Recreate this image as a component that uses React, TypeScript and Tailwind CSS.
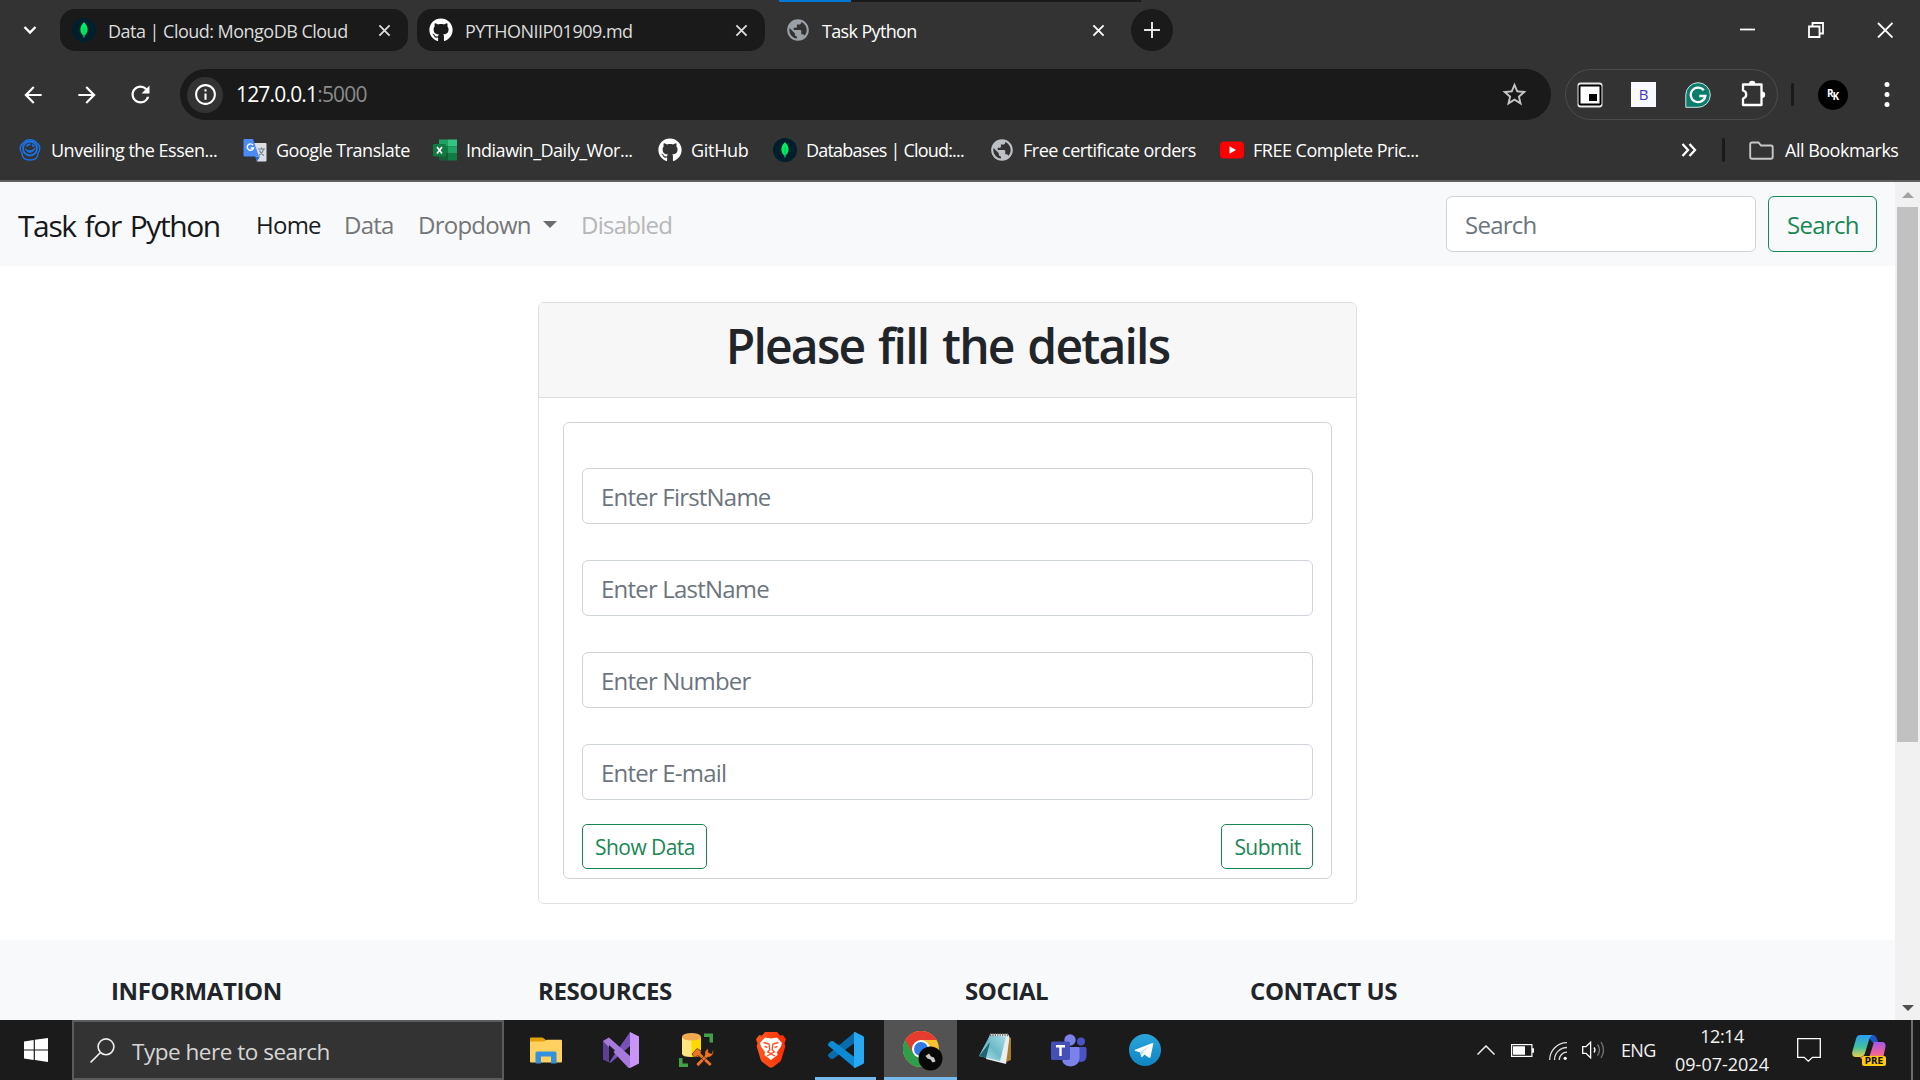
import type { ReactNode } from 'react';
import { FaGithub } from 'react-icons/fa';
import { MdPublic, MdArrowBack, MdArrowForward, MdRefresh, MdStarOutline, MdInfoOutline } from 'react-icons/md';

function MongoIcon() {
  return (
    <svg viewBox="0 0 24 24" className="size-6 shrink-0">
      <circle cx="12" cy="12" r="12" fill="#001e2b" />
      <path d="M12 4c.6 1.200 3.600 3.200 3.600 7.600 0 3.100-1.800 5-3.200 6.100L12.200 20h-.5l-.3-2.300C10 16.600 8.400 14.700 8.400 11.600 8.400 7.200 11.500 5.200 12 4Z" fill="#00ed64" />
      <path d="M12.100 9v10" stroke="#00a34a" strokeWidth=".6" />
    </svg>
  );
}

function CloseX({ className }: { className: string }) {
  return (
    <svg viewBox="0 0 14 14" className={className} fill="none" stroke="currentColor" strokeWidth="2">
      <path d="M1.500 1.500 12.500 12.500M12.500 1.500 1.500 12.500" />
    </svg>
  );
}

function Tab({ icon, title, tracking }: { icon: ReactNode; title: string; tracking: string }) {
  return (
    <div className="flex h-[42px] w-[348px] items-center rounded-[15px] bg-[#1a1a1a] pl-3 pr-[17px] text-[#dcdcdc]">
      {icon}
      <span className={`ml-3 mt-[2px] flex-1 whitespace-nowrap text-[18px] leading-6 ${tracking}`}>{title}</span>
      <CloseX className="size-[13px]" />
    </div>
  );
}

function TabStrip() {
  return (
    <div className="flex h-[60px] items-center">
      <svg viewBox="0 0 14 10" className="ml-[23px] mr-[23px] h-[10px] w-[14px]" fill="none" stroke="#fff" strokeWidth="2.400">
        <path d="M1.500 2 7 7.500 12.500 2" />
      </svg>
      <Tab icon={<MongoIcon />} title="Data | Cloud: MongoDB Cloud" tracking="tracking-[-0.52px]" />
      <div className="w-[9px]" />
      <Tab icon={<FaGithub className="size-6 text-white" />} title="PYTHONIIP01909.md" tracking="tracking-[-0.52px]" />
      <div className="ml-[14px] flex h-[60px] w-[362px] flex-col">
        <div className="h-[2px] bg-[#1a1a1a]">
          <div className="h-[2px] w-[72px] bg-[#0078d7]" />
        </div>
        <div className="flex h-[56px] items-center pl-[6px] pr-[36px] text-white">
          <MdPublic className="size-[26px] text-[#9aa0a6]" />
          <span className="ml-[11px] mt-[2px] flex-1 text-[18px] leading-6 tracking-[-0.65px]">Task Python</span>
          <CloseX className="size-[13px]" />
        </div>
      </div>
      <div className="-ml-[10px] flex size-[42px] items-center justify-center rounded-full bg-[#1a1a1a]">
        <svg viewBox="0 0 16 16" className="size-4" stroke="#e3e3e3" strokeWidth="2">
          <path d="M8 0v16M0 8h16" />
        </svg>
      </div>
      <svg viewBox="0 0 153 16" className="ml-auto mr-[27px] h-4 w-[153px]" fill="none" stroke="#fff" strokeWidth="1.800">
        <path d="M0 7.500h15" />
        <path d="M69 4.500h10.500V15H69ZM72.500 4V1H83v10.500h-3" />
        <path d="M138 1l14.500 14.500M152.500 1 138 15.500" />
      </svg>
    </div>
  );
}

function Toolbar() {
  return (
    <div className="flex h-[69px] items-center text-white">
      <MdArrowBack className="ml-[20px] size-[26px]" />
      <MdArrowForward className="ml-[28px] size-[26px]" />
      <MdRefresh className="ml-[27px] size-[27px]" />
      <div className="ml-[26px] flex h-[51px] w-[1371px] items-center rounded-full bg-[#1a1a1a] pl-[7px] pr-[22px]">
        <div className="flex size-9 items-center justify-center rounded-full bg-[#333]">
          <MdInfoOutline className="size-[25px]" />
        </div>
        <span className="ml-[13px] flex-1 pb-px text-[21px] leading-7 tracking-[-0.82px]">
          127.0.0.1<span className="text-[#8b8b8b]">:5000</span>
        </span>
        <MdStarOutline className="size-[29px] text-[#c4c4c4]" />
      </div>
      <div className="ml-[14px] flex h-[51px] w-[213px] items-center rounded-full border border-[#4c4c4c] pl-[11px]">
        <svg viewBox="0 0 26 26" className="size-[26px]">
          <rect x=".5" y=".5" width="25" height="25" rx="3" fill="#e8e8e8" />
          <rect x="2.500" y="3.500" width="21" height="19" rx="1" fill="#fff" stroke="#000" strokeWidth="2" />
          <rect x="12" y="12" width="8" height="7" fill="#000" />
        </svg>
        <div className="ml-[28px] flex size-[25px] items-center justify-center bg-[#f8f8ff] text-[15px] font-normal text-[#3c35c4]">B</div>
        <svg viewBox="0 0 26 26" className="ml-[29px] size-[26px]">
          <path d="M13 .7a12.300 12.300 0 1 1 0 24.600H.8V13A12.300 12.300 0 0 1 13 .7Z" fill="#0b7d6d" stroke="#cfe5e1" strokeWidth="1" />
          <path d="M18.800 8.300A7.300 7.300 0 1 0 20.300 14h-6" fill="none" stroke="#fff" strokeWidth="2.300" />
        </svg>
        <svg viewBox="0 0 27 28" className="-mt-1 ml-[29px] h-7 w-[27px]" fill="none" stroke="#fff" strokeWidth="2.300" strokeLinejoin="round">
          <path d="M3 5.500h18.500v20.500H3v-6.500c4.300-1.200 4.300-6.800 0-8Z" />
          <path d="M9 5a3.200 3.200 0 0 1 6.400 0ZM22 12.500a3.200 3.200 0 0 1 0 6.400Z" fill="#fff" stroke="none" />
        </svg>
      </div>
      <div className="ml-[13px] h-[23px] w-[3px] rounded bg-[#1a1a1a]" />
      <div className="ml-[24px] flex size-[30px] items-center justify-center rounded-full bg-black text-[10px] font-bold leading-none">
        <span className="-mt-1">R</span>
        <span className="-ml-px mt-[3px]">K</span>
      </div>
      <svg viewBox="0 0 6 27" className="ml-[36px] h-[27px] w-[6px]" fill="#fff">
        <circle cx="3" cy="3.500" r="2.500" />
        <circle cx="3" cy="13.500" r="2.500" />
        <circle cx="3" cy="23.500" r="2.500" />
      </svg>
    </div>
  );
}

function Bookmark({ icon, title, className }: { icon: ReactNode; title: string; className: string }) {
  return (
    <div className={`flex items-center whitespace-nowrap ${className}`}>
      <div className="mr-[9px] flex size-6 items-center justify-center">{icon}</div>
      {title}
    </div>
  );
}

function Bookmarks() {
  return (
    <div className="flex h-[42px] items-center pl-[18px] text-[18px] leading-6 tracking-[-0.5px] text-white">
      <Bookmark
        className="w-[225px]"
        title="Unveiling the Essen..."
        icon={
          <svg viewBox="0 0 24 24" className="size-6" fill="none" stroke="#1a73e8">
            <circle cx="12" cy="10.500" r="7" strokeWidth="1.800" />
            <path d="M5 5.500C1.500 7 1.500 13 4 15c0 4.500 3 7 8 7s8-2.500 8-7c2.500-2 2.500-8-1-9.500-3-5-11-5-14 0Z" strokeWidth="1.400" />
            <path d="M7.500 11c2 2.500 7 2.500 9.500-1-1 5-8 6-9.500 1Z" fill="#1a73e8" />
            <path d="M8.500 8.500q1-2.500 4-2M14 6.500q1 1.500 2.500 2" strokeWidth="1.800" />
          </svg>
        }
      />
      <Bookmark
        className="w-[190px]"
        title="Google Translate"
        icon={
          <svg viewBox="0 0 24 24" className="size-6">
            <path d="M9 5h13.500q1 0 1 1v16.500q0 1-1 1H14Z" fill="#dcdee0" />
            <path d="M12 18.500h5L14 23.500Z" fill="#3367d6" />
            <path d="M1.500 1H10l6 17.500H1.500q-1 0-1-1V2q0-1 1-1Z" fill="#4c8bf5" />
            <path d="M10 7.200A3.200 3.200 0 1 0 10.500 10H7.800" fill="none" stroke="#fff" strokeWidth="1.400" />
            <path d="M15 11h7M18.500 9.500V11M20.500 11c-.5 3-2.500 5-4.500 6.200M16.500 12.500c1 2.500 2.500 4 4.500 5" fill="none" stroke="#6f8297" strokeWidth="1.100" />
          </svg>
        }
      />
      <Bookmark
        className="w-[225px]"
        title="Indiawin_Daily_Wor..."
        icon={
          <svg viewBox="0 0 24 24" className="size-6">
            <path d="M6 1.500h9v7H6Z" fill="#21a366" />
            <path d="M15 1.500h9v7h-9Z" fill="#33c481" />
            <path d="M6 8.500h9v7H6Z" fill="#107c41" />
            <path d="M15 8.500h9v7h-9Z" fill="#21a366" />
            <path d="M6 15.500h9v7H6Z" fill="#185c37" />
            <path d="M15 15.500h9v7h-9Z" fill="#107c41" />
            <rect y="6" width="13" height="12.500" rx="1" fill="#107c41" />
            <path d="m4 9 5 6.500M9 9l-5 6.500" stroke="#fff" strokeWidth="1.700" />
          </svg>
        }
      />
      <Bookmark className="w-[115px] tracking-[-0.3px]" title="GitHub" icon={<FaGithub className="size-6" />} />
      <Bookmark className="w-[217px] tracking-[-0.8px]" title="Databases | Cloud:..." icon={<MongoIcon />} />
      <Bookmark className="w-[230px]" title="Free certificate orders" icon={<MdPublic className="size-[26px] shrink-0 text-[#bdc1c6]" />} />
      <Bookmark
        className="w-[200px]"
        title="FREE Complete Pric..."
        icon={
          <svg viewBox="0 0 24 18" className="h-[18px] w-6">
            <rect y=".5" width="24" height="17" rx="4" fill="#f00" />
            <path d="M9.500 5.300 16 9l-6.500 3.700Z" fill="#fff" />
          </svg>
        }
      />
      <svg viewBox="0 0 16 14" className="ml-auto h-[14px] w-4" fill="none" stroke="#fff" strokeWidth="2.300">
        <path d="M1.500 1 7 7l-5.500 6M8.500 1 14 7l-5.500 6" />
      </svg>
      <div className="ml-[25px] h-6 w-[3px] rounded bg-[#1a1a1a]" />
      <svg viewBox="0 0 25 19" className="ml-[24px] h-[19px] w-[25px]" fill="none" stroke="#c7c7c7" strokeWidth="1.900">
        <path d="M3 1.500h6.500l2.500 3h10q1.700 0 1.700 1.700V16q0 1.700-1.700 1.700H3Q1.200 17.700 1.200 16V3.200Q1.200 1.500 3 1.500Z" />
      </svg>
      <span className="ml-[11px] w-[135px] whitespace-nowrap">All Bookmarks</span>
    </div>
  );
}

function SiteNav() {
  return (
    <nav className="flex h-[84px] items-center bg-[#f8f9fa] pl-[18px] pr-[18px] text-[24px]">
      <span className="w-[238px] whitespace-nowrap pt-[2px] text-[30px] leading-[45px] tracking-[-1.4px] text-[#16181a] [word-spacing:2.500px]">
        Task for Python
      </span>
      <div className="flex pt-[2px] leading-9 tracking-[-0.75px] text-[#757678]">
        <span className="w-[88px] text-[#1b1c1d]">Home</span>
        <span className="w-[74px]">Data</span>
        <span className="flex w-[163px] items-center">
          Dropdown
          <span className="-mt-[2px] ml-[12px] border-x-[7px] border-t-[7px] border-x-transparent border-t-[#6c6d6f]" />
        </span>
        <span className="text-[#b6b7b8]">Disabled</span>
      </div>
      <input
        placeholder="Search"
        className="ml-auto h-14 w-[310px] rounded-[6px] border border-[#ced4da] bg-white px-[18px] pt-px tracking-[-0.75px] placeholder:text-[#6c757d]"
      />
      <button className="ml-3 h-14 w-[109px] rounded-[6px] border border-[#198754] pl-px pt-[2px] tracking-[-0.7px] text-[#198754]">Search</button>
    </nav>
  );
}

const fields = ['Enter FirstName', 'Enter LastName', 'Enter Number', 'Enter E-mail'];

function DetailsCard() {
  return (
    <section className="ml-[538px] mt-9 w-[819px] overflow-hidden rounded-[6px] border border-[#dfdfdf]">
      <header className="h-[95px] border-b border-[#dfdfdf] bg-[#f7f7f7] pt-[14px] text-center">
        <h2 className="text-[48px] font-semibold leading-[58px] tracking-[-1.8px] text-[#212529] [word-spacing:3px]">Please fill the details</h2>
      </header>
      <div className="p-6">
        <form className="flex flex-col gap-9 rounded-[6px] border border-[#ced4da] px-[18px] pb-[9px] pt-[45px]">
          {fields.map((f) => (
            <input
              key={f}
              placeholder={f}
              className="h-14 w-full rounded-[6px] border border-[#ced4da] px-[18px] text-[24px] tracking-[-0.8px] placeholder:text-[#6c757d]"
            />
          ))}
          <div className="-mt-3 flex justify-between text-[21px] tracking-[-0.55px] text-[#198754]">
            <button type="button" className="h-[45px] w-[125px] rounded-[5px] border border-[#198754] pl-px pt-[3px]">Show Data</button>
            <button type="button" className="h-[45px] w-[92px] rounded-[5px] border border-[#198754] pl-px pt-[3px]">Submit</button>
          </div>
        </form>
      </div>
    </section>
  );
}

function SiteFooter() {
  return (
    <footer className="mt-9 flex flex-1 bg-[#f8f9fa] pl-[111px] pt-[33px] text-[24px] font-bold leading-9 tracking-[-0.4px] text-[#212529]">
      <span className="w-[427px]">INFORMATION</span>
      <span className="w-[427px]">RESOURCES</span>
      <span className="w-[285px]">SOCIAL</span>
      <span>CONTACT US</span>
    </footer>
  );
}

function Scrollbar() {
  return (
    <div className="flex w-[25px] flex-col items-center bg-[#f1f1f1]">
      <div className="mt-[10px] border-x-[6px] border-b-[6px] border-x-transparent border-b-[#a3a3a3]" />
      <div className="mt-[9px] h-[535px] w-[21px] bg-[#c1c1c1]" />
      <div className="mb-[9px] mt-auto border-x-[6px] border-t-[6px] border-x-transparent border-t-[#505050]" />
    </div>
  );
}

function TaskButton({ children, active, running }: { children: ReactNode; active?: boolean; running?: boolean }) {
  return (
    <div className="flex h-[60px] w-[75px] flex-col items-center">
      <div className={`flex h-[57px] items-center justify-center pt-[3px] ${active ? 'w-[73px] bg-[#545354]' : 'w-[61px]'}`}>{children}</div>
      {(active || running) && <div className={`h-[3px] bg-[#76b9ed] ${active ? 'w-[73px]' : 'w-[61px]'}`} />}
    </div>
  );
}

function TaskIcons() {
  return (
    <div className="ml-1 flex">
      <TaskButton>
        <svg viewBox="0 0 32 28" className="mt-px h-7 w-8">
          <path d="M1 .5h11q1 0 2 1L16 3v4H0V1.500Q0 .5 1 .5Z" fill="#e3a008" />
          <path d="M0 4.500h14l3-1.800h14q1 0 1 1V24.500q0 1-1 1H1q-1 0-1-1Z" fill="#ffd160" />
          <path d="M5.500 26.500V16q0-1.500 1.500-1.500h18q1.500 0 1.500 1.500v10.500h-5.500v-7H11v7Z" fill="#3590de" />
        </svg>
      </TaskButton>
      <TaskButton>
        <svg viewBox="0 0 36 36" className="size-9">
          <path d="M0 9 6 5.500V30.500L0 27.500Z" fill="#5d3f96" />
          <path d="M6 30.500 27 0v14L8 30.500Z" fill="#7652b4" />
          <path d="M0 9 6 5.500 27 24v12h-1.500Z" fill="#a679dc" />
          <path d="M6 13v11l6-5.500Z" fill="#1c1b1c" />
          <path d="M27 0l9 4.500v27L27 36Z" fill="#c993f8" />
        </svg>
      </TaskButton>
      <TaskButton>
        <svg viewBox="0 0 36 36" className="size-9">
          <path d="M4 5h19v16.500q0 3.500-9.500 3.500T4 21.500Z" fill="#ffe680" />
          <path d="M13.500 5H23v16.500q0 3-7 3.500h-2.500Z" fill="#ffd800" />
          <ellipse cx="13.500" cy="4.800" rx="9.500" ry="3.800" fill="#f0a94e" />
          <path d="M26 1.500h9v9h-3.500V5H26ZM1 26h3.500v5.500H10V35H1Z" fill="#43a047" />
          <path d="M14 22l5-5.500 4.500 2.500-1 2L34 32l-2.200 2.200L20 23.500l-3.500 2ZM18 32l9-9q-1-4.500 3-6.500l.5 4 3 1 1.500-4q1.500 5-3 7.500l-2.500.3L20.300 34.500Z" fill="#ef7422" stroke="#1c1b1c" strokeWidth=".6" />
        </svg>
      </TaskButton>
      <TaskButton>
        <svg viewBox="0 0 30 36" className="h-9 w-[30px]">
          <defs>
            <linearGradient id="brave" x1="0" x2="1" y1="0" y2="0">
              <stop offset="0" stopColor="#ff5a1f" />
              <stop offset="1" stopColor="#ff2b05" />
            </linearGradient>
          </defs>
          <path d="M9 0h12l3 3.500 3-.3 3 4-1.500 4 .8 3-4 13.500q-.5 1.500-2 2.500L17 35q-2 1.300-4 0l-6.300-4.800q-1.500-1-2-2.500L.7 14.200l.8-3L0 7.200l3-4 3 .3Z" fill="url(#brave)" />
          <path d="M15 6.500 9 5.500 4 11l1 3.500 4 5.500-.5 3L15 28l6.500-5-.5-3 4-5.500 1-3.500-5-5.500Z" fill="#fff" />
          <path d="M7.500 10.500 13 12l.8 5.500-2 2.500 3.200 1.500 3.200-1.500-2-2.500L17 12l5.500-1.500M8.500 14.500l3 .8M21.500 14.500l-3 .8M11 24l4-2 4 2" fill="none" stroke="#ff4a1a" strokeWidth="1.300" />
        </svg>
      </TaskButton>
      <TaskButton running>
        <svg viewBox="0 0 36 36" className="size-9">
          <path d="M27 0v10.500L5 27 2.500 26.700 0 24V22.500Z" fill="#0b6cad" />
          <path d="M27 36V25.500L5 9 2.500 9.300 0 12v1.500Z" fill="#0d8ad4" />
          <path d="M26 0q.8-.2 1.500.2L35 4q1 .5 1 1.500v25q0 1-1 1.500l-7.500 3.800q-.8.4-1.500.2Z" fill="#27aaf3" />
        </svg>
      </TaskButton>
      <TaskButton active>
        <svg viewBox="0 0 40 40" className="-mb-[2px] ml-[4px] size-10">
          <circle cx="18" cy="18" r="18" fill="#fbc02d" />
          <path d="M18 18 2.400 9A18 18 0 0 0 18 36l7.800-13.500Z" fill="#2e9e4b" />
          <path d="M18 9h15.600A18 18 0 0 0 2.400 9l7.800 13.500Z" fill="#e53c2f" />
          <circle cx="18" cy="18" r="9" fill="#fff" />
          <circle cx="18" cy="18" r="7" fill="#2f7ae5" />
          <circle cx="27.500" cy="27.500" r="12" fill="#080808" />
          <path d="m22.500 25 3.500-2.500 2 3 3 1 1.500 4-3 1-2-3-3-1Z" fill="#c9c9c9" />
        </svg>
      </TaskButton>
      <TaskButton>
        <svg viewBox="0 0 34 32" className="-ml-[2px] -mt-[2px] h-8 w-[34px]">
          <defs>
            <linearGradient id="note" x1="0" x2="1" y1="1" y2="0">
              <stop offset="0" stopColor="#bfeaf0" />
              <stop offset=".5" stopColor="#6db9c8" />
              <stop offset="1" stopColor="#a6dfe6" />
            </linearGradient>
          </defs>
          <path d="M29 4l4 1v22l-5 2Z" fill="#a87b2f" />
          <path d="M12 1h18l1.500 3L28 31 8 26Z" fill="#e9eef0" />
          <path d="M12 2l16 2-6 24L1 23Z" fill="url(#note)" />
          <path d="M1 23 12 9 8 25Z" fill="#1f6772" />
          <path d="M12 1.800h18" stroke="#777" strokeWidth="3" strokeDasharray="1.200 1.200" />
        </svg>
      </TaskButton>
      <TaskButton>
        <svg viewBox="0 0 36 33" className="-ml-1 h-[33px] w-9">
          <circle cx="30" cy="7.500" r="4" fill="#4a52c4" />
          <path d="M24 13h10q1.500 0 1.500 1.500V22q0 5.500-5.500 6-4 0-6-2Z" fill="#4a52c4" />
          <circle cx="19" cy="6" r="5.700" fill="#7b83eb" />
          <path d="M11 13h16q1.500 0 1.500 1.500V24q-.5 8-9 8.500Q11 32 11 24Z" fill="#7b83eb" />
          <rect y="7.500" width="19" height="18.500" rx="1.700" fill="#464eb8" />
          <path d="M5 12.300h9M9.500 12v10" stroke="#fff" strokeWidth="2.400" />
        </svg>
      </TaskButton>
      <TaskButton>
        <svg viewBox="0 0 32 32" className="-ml-[2px] size-8">
          <defs>
            <linearGradient id="tg" x1="0" x2="0" y1="0" y2="1">
              <stop offset="0" stopColor="#2ba5dc" />
              <stop offset="1" stopColor="#0f85c2" />
            </linearGradient>
          </defs>
          <circle cx="16" cy="16" r="16" fill="url(#tg)" />
          <path d="M6 15.800 23.500 9q1-.2.800.8L21.500 23q-.3 1.600-2 .6l-4-3-2.300 2.300q-.8.8-1-.4L11 18.200 6.500 17q-1.500-.5-.5-1.200Z" fill="#fff" />
          <path d="m11.500 18 9-6.500-7 7-.5 4Z" fill="#b9d8ea" />
        </svg>
      </TaskButton>
    </div>
  );
}

function Tray() {
  return (
    <div className="ml-auto flex h-[60px] items-center text-[18px] text-[#f3f3f3]">
      <svg viewBox="0 0 18 10" className="h-[10px] w-[18px]" fill="none" stroke="#eee" strokeWidth="1.500">
        <path d="M.5 9.500 9 1l8.500 8.500" />
      </svg>
      <svg viewBox="0 0 23 13" className="ml-[16px] h-[13px] w-[23px]">
        <rect x=".6" y=".6" width="20.300" height="11.800" fill="none" stroke="#fff" strokeWidth="1.200" />
        <path d="M2 2.300h12v8.400H2ZM21 4.300h2v4.400h-2Z" fill="#fff" />
      </svg>
      <svg viewBox="0 0 18 18" className="ml-[15px] mt-[2px] h-[18px] w-[18px]" fill="none" stroke="#ddd" strokeWidth="1.300">
        <path d="M.7 18A17.300 17.300 0 0 1 18 .7M5.500 18A12.500 12.500 0 0 1 18 5.500M10.200 18A7.800 7.800 0 0 1 18 10.200" />
        <circle cx="16.200" cy="16.300" r="1.600" fill="#fff" stroke="none" />
      </svg>
      <svg viewBox="0 0 23 18" className="ml-[15px] h-[18px] w-[23px]" fill="none" stroke="#fff" strokeWidth="1.300">
        <path d="M.7 5.700H4l4.600-4.500v15.600L4 12.300H.7Z" />
        <path d="M12 6.500q2 2.500 0 5" />
        <path d="M15.500 3.500q4 5.500 0 11M19 1q5 8 0 16" stroke="#777" />
      </svg>
      <span className="ml-[16px] w-[34px] pt-px tracking-[-0.7px]">ENG</span>
      <div className="ml-[13px] flex w-[108px] flex-col items-center leading-7">
        <span className="tracking-[-0.5px]">12:14</span>
        <span className="whitespace-nowrap">09-07-2024</span>
      </div>
      <svg viewBox="0 0 24 24" className="ml-[21px] size-6" fill="none" stroke="#fff" strokeWidth="1.300">
        <path d="M.7.7h22.600v18.600h-7.800L11.300 23.200 7.200 19.300H.7Z" />
      </svg>
      <svg viewBox="0 0 34 32" className="ml-[31px] h-8 w-[34px]">
        <defs>
          <linearGradient id="cpA" x1="0" x2="0" y1="0" y2="1">
            <stop offset="0" stopColor="#2a9df4" />
            <stop offset=".55" stopColor="#3fc0a0" />
            <stop offset="1" stopColor="#e8d04a" />
          </linearGradient>
          <linearGradient id="cpB" x1="0" x2="0" y1="0" y2="1">
            <stop offset="0" stopColor="#a657e8" />
            <stop offset=".7" stopColor="#f0609a" />
            <stop offset="1" stopColor="#f58a6a" />
          </linearGradient>
        </defs>
        <path d="M15 1h6q2.500 0 4 4l1 3-5 1Z" fill="#1e55c8" />
        <path d="M8 1h13q-3 1-4 5l-4 13q-1 4-5 4H4q-5 0-3.500-6L4 5q1-4 4-4Z" fill="url(#cpA)" />
        <path d="M22 8h8q4 0 3.500 5L31 24H17Z" fill="url(#cpB)" />
        <path d="M8 23h7v4q-5 0-7-4Z" fill="#f0704a" />
        <rect x="10" y="22" width="24" height="10" rx="2" fill="#ffc90e" />
        <text x="22" y="30.200" textAnchor="middle" fontFamily="DejaVu Sans" fontWeight="700" fontSize="8.500" fill="#111">PRE</text>
      </svg>
      <div className="ml-[25px] mr-[7px] h-[60px] w-[2px] bg-[#6d6d6d]" />
    </div>
  );
}

function Taskbar() {
  return (
    <div className="flex h-[60px] bg-[#1c1b1c]">
      <div className="flex w-[72px] items-center pl-6">
        <svg viewBox="0 0 24 24" className="size-6" fill="#fff">
          <path d="M0 3.400 9.700 2v9.400H0ZM10.900 1.800 24 0v11.400H10.900ZM0 12.500h9.700v9.400L0 20.600ZM10.900 12.500H24V24l-13.100-1.900Z" />
        </svg>
      </div>
      <div className="flex w-[432px] items-center border-2 border-[#5c5c5c] bg-[#333] pl-4">
        <svg viewBox="0 0 25 25" className="size-[25px]" fill="none" stroke="#eee" strokeWidth="1.600">
          <circle cx="16" cy="8.800" r="7.900" />
          <path d="M10.500 14.500.6 24.400" />
        </svg>
        <span className="ml-[17px] pt-1 text-[22.5px] leading-8 tracking-[-0.48px] text-[#d6d6d6]">Type here to search</span>
      </div>
      <TaskIcons />
      <Tray />
    </div>
  );
}

export default function App() {
  return (
    <div className="flex h-[1080px] w-[1920px] flex-col overflow-hidden bg-white font-['Open_Sans','Noto_Sans',sans-serif]">
      <div className="h-[182px] border-b-2 border-[#606060] bg-[#333]">
        <TabStrip />
        <Toolbar />
        <Bookmarks />
      </div>
      <div className="flex min-h-0 flex-1">
        <main className="flex min-w-0 flex-1 flex-col overflow-hidden">
          <SiteNav />
          <DetailsCard />
          <SiteFooter />
        </main>
        <Scrollbar />
      </div>
      <Taskbar />
    </div>
  );
}
